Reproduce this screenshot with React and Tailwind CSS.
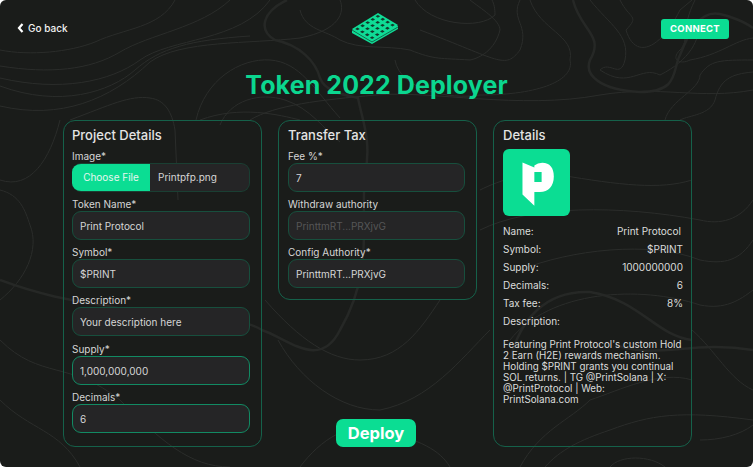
import React from 'react';

const font = { fontFamily: 'Inter' };

const thinLines = [
  'M0 50 C30 56 70 52 95 42 C125 28 160 28 175 0',
  'M0 66 C50 74 90 70 120 52 C150 34 200 28 230 0',
  'M0 78 C60 92 110 82 140 60 C170 38 240 42 270 0',
  'M0 106 C60 120 110 100 150 62 C180 40 250 44 300 38 C340 30 345 12 340 0',
  'M0 86 C60 108 110 92 135 70 C160 48 190 40 250 36',
  'M70 120 C110 105 130 95 150 98 C165 100 172 112 175 130 L178 200',
  'M196 120 C205 80 240 58 270 60 C300 62 315 90 340 118',
  'M220 125 C230 100 260 92 285 100 C310 108 325 130 340 142',
  'M300 10 C305 30 325 30 340 40 C360 50 385 45 410 50 C435 60 440 58 470 60 C480 58 495 50 500 30 C500 20 480 8 470 0',
  'M415 0 C430 25 480 30 495 15 C495 8 494 4 492 0',
  'M520 0 C510 20 530 25 520 50 C505 70 500 60 420 30',
  'M530 0 C540 30 575 35 570 60 C575 80 540 95 480 95 C450 100 400 90 395 60',
  'M590 0 C610 25 630 35 625 60 C620 80 610 60 600 70 C630 90 640 65 660 75 C690 60 700 40 700 20',
  'M620 0 C630 20 640 15 626 30 C635 60 660 50 680 10 L692 0',
  'M695 0 C680 30 690 40 680 50 C670 60 680 65 690 60 C720 55 735 40 753 38',
  'M753 60 C720 60 710 60 700 75 C700 90 670 100 665 120',
  'M753 72 C730 74 720 80 715 100 C710 115 690 115 680 120',
  'M250 120 C275 105 320 100 376 95 C430 90 520 110 600 95 C660 85 700 100 753 90',
  'M200 120 C240 105 280 115 300 120',
  'M0 180 C30 190 50 160 60 120',
  'M0 300 C25 280 40 250 30 225 C25 210 20 195 0 190',
  'M480 190 C500 180 530 170 560 175 C620 185 660 190 692 180',
  'M480 230 C530 205 620 205 700 220 C720 225 740 220 753 200',
  'M520 270 C570 250 650 240 700 260 C725 265 740 260 753 240',
  'M510 340 C550 290 640 285 700 305 C725 310 740 300 753 290',
  'M0 340 C40 380 70 360 120 400 C160 440 190 467 230 467',
  'M0 400 C30 430 60 430 80 467',
  'M300 467 C320 440 350 420 380 430 C420 440 440 450 450 467',
  'M520 467 C540 430 570 420 590 400 C620 390 660 370 692 380',
  'M545 467 C560 450 580 440 610 430 C650 415 680 410 753 420',
  'M610 467 C620 455 650 455 665 467',
  'M692 330 C715 350 730 380 753 390',
  'M700 440 C720 440 740 435 753 425',
  'M265 300 C300 340 330 360 360 360 C400 360 420 330 440 300',
  'M278 340 C300 380 340 410 380 410 C430 400 460 360 490 330',
];

const thickLines = [
  'M287 0 C262 12 258 30 275 40 C300 45 316 62 320 78 C325 92 345 95 358 98 C362 120 372 140 365 175 C360 220 375 270 340 330 C320 370 290 340 262 330 C230 310 190 335 150 320 C120 300 80 310 0 280',
  'M573 0 C580 30 605 35 590 60 C584 75 600 90 640 92 C680 92 672 70 680 55 C690 30 700 10 720 14 C730 16 745 22 753 28',
  'M692 340 C655 335 640 300 590 292 C545 290 520 320 510 360',
  'M615 345 C660 360 690 340 753 350',
];

const logoCells = [];
for (let r = 0; r < 4; r++) {
  for (let c = 0; c < 5; c++) {
    const u = (c + 0.55) / 5.1;
    const v = (r + 0.55) / 4.1;
    const x = 1 + u * 26 + v * 20;
    const y = 17 + u * -16 + v * 12;
    logoCells.push(`M${x - 2.3} ${y} L${x} ${y - 1.4} L${x + 2.3} ${y} L${x} ${y + 1.4} Z`);
  }
}

const Field = ({ label, value, strong, muted }) => (
  <div className="flex flex-col">
    <label className="h-[19px] pt-[5px] text-[10px] leading-[14px] text-[#d6d6d6]">{label}</label>
    <input
      readOnly
      value={value}
      style={font}
      className={`h-[29px] w-full rounded-[9px] border bg-[#252526] px-[7px] text-[10px] outline-none ${
        strong ? 'border-[#128a63]' : 'border-[#174f3d]'
      } ${muted ? 'text-[#555657]' : 'text-[#d6d6d6]'}`}
    />
  </div>
);

const Row = ({ label, value, extra }) => (
  <div className="flex h-[18px] items-center justify-between">
    <span>{label}</span>
    <span className={extra ? 'pr-[2px]' : ''}>{value}</span>
  </div>
);

const App = () => {
  return (
    <div style={font} className="relative h-[467px] w-[753px] overflow-hidden rounded-[6px] bg-[#1a1c1a] text-white">
      {/* Contour background */}
      <svg className="absolute inset-0" width="753" height="467" viewBox="0 0 753 467" fill="none">
        {thinLines.map((d) => (
          <path key={d} d={d} stroke="#2b2d2b" strokeWidth="1" />
        ))}
        {thickLines.map((d) => (
          <path key={d} d={d} stroke="#262826" strokeWidth="2.5" />
        ))}
      </svg>

      <div className="relative flex h-full flex-col">
        {/* Header */}
        <div className="flex h-[57px] items-start justify-between pl-[17px] pr-[24px]">
          <a className="mt-[21px] flex items-center gap-[4px] text-[10px] font-medium leading-[14px] text-[#f2f2f2]">
            <svg width="7" height="10" viewBox="0 0 7 10" fill="none">
              <path d="M5.5 1 L2 5 L5.5 9" stroke="white" strokeWidth="2.2" />
            </svg>
            Go back
          </a>
          <svg className="ml-[22px] mt-[12px]" width="48" height="33" viewBox="0 0 48 33" fill="none">
            <path d="M1 21 L1 18 L27 2 L47 14 L47 17 L21 32 Z" fill="#0fdc96" />
            <path d="M1 18 L21 30 L47 15" stroke="#123a2c" strokeWidth="0.7" />
            <path d="M1 17 L27 1 L47 13 L21 29 Z" fill="#0fdc96" />
            {logoCells.map((d) => (
              <path key={d} d={d} fill="#123a2c" />
            ))}
          </svg>
          <button className="mt-[19px] h-[20px] w-[68px] rounded-[3px] bg-[#0bdd93] text-[9.5px] font-bold tracking-[0.3px] text-white">
            CONNECT
          </button>
        </div>

        <h1 className="h-[63px] pt-[12px] text-center text-[25px] font-bold leading-[32px] tracking-[0.1px] text-[#0bd68f]">
          Token 2022 Deployer
        </h1>

        {/* Columns */}
        <div className="grid grid-cols-[199px_199px_199px] gap-x-[16px] pl-[63px]">
          <section className="h-[327px] rounded-[12px] border border-[#15614a] pl-[8px] pr-[11px]">
            <h2 className="h-[23px] pt-[5px] text-[13px] font-medium leading-[18px] text-[#e4e4e4]">Project Details</h2>
            <div className="flex flex-col">
              <div className="flex flex-col">
                <label className="h-[19px] pt-[5px] text-[10px] leading-[14px] text-[#d6d6d6]">Image*</label>
                <div className="flex h-[29px] overflow-hidden rounded-[9px] border border-l-0 border-[#1a3f33] bg-[#252526] text-[10px]">
                  <span className="flex w-[78px] items-center justify-center bg-[#0bdd93] text-[#e6f7f0]">Choose File</span>
                  <span className="flex items-center pl-[8px] text-[#d6d6d6]">Printpfp.png</span>
                </div>
              </div>
              <Field label="Token Name*" value="Print Protocol" />
              <Field label="Symbol*" value="$PRINT" />
              <Field label="Description*" value="Your description here" />
              <div className="h-[1px]" />
              <Field label="Supply*" value="1,000,000,000" strong />
              <Field label="Decimals*" value="6" strong />
            </div>
          </section>

          <div className="flex h-[327px] flex-col items-center justify-between">
            <section className="h-[180px] w-full rounded-[12px] border border-[#15614a] pl-[9px] pr-[11px]">
              <h2 className="h-[23px] pt-[5px] text-[13px] font-medium leading-[18px] text-[#e4e4e4]">Transfer Tax</h2>
              <Field label="Fee %*" value="7" />
              <Field label="Withdraw authority" value="PrinttmRT...PRXjvG" muted />
              <Field label="Config Authority*" value="PrinttmRT...PRXjvG" />
            </section>
            <button className="mr-[3px] h-[28px] w-[80px] rounded-[7px] bg-[#0bdd93] text-[16.5px] font-bold text-white">Deploy</button>
          </div>

          <section className="h-[327px] rounded-[12px] border border-[#15614a] pl-[9px] pr-[8px] text-[10px] text-[#dcdcdc]">
            <h2 className="h-[28px] pt-[5px] text-[13px] font-medium leading-[18px] text-[#e4e4e4]">Details</h2>
            <div className="flex h-[67px] w-[67px] items-center justify-center rounded-[6px] bg-[#0bdd93]">
              <svg width="67" height="67" viewBox="0 0 203 203">
                <path
                  fillRule="evenodd"
                  fill="white"
                  d="M59 41 L95 56 L95 50 Q105 42 119 42 C142 42 154 58 154 83 C154 113 137 130 112 130 L95 130 L95 172 L59 138 Z M95 70 L117 70 L117 100 L95 100 Z"
                />
              </svg>
            </div>
            <div className="mt-[6px]">
              <Row label="Name:" value="Print Protocol" extra />
              <Row label="Symbol:" value="$PRINT" />
              <Row label="Supply:" value="1000000000" />
              <Row label="Decimals:" value="6" />
              <Row label="Tax fee:" value="8%" />
              <Row label="Description:" value="" />
            </div>
            <p className="mt-[9px] whitespace-nowrap text-[9.8px] leading-[11px]">
              Featuring Print Protocol's custom Hold
              <br />
              2 Earn (H2E) rewards mechanism.
              <br />
              Holding $PRINT grants you continual
              <br />
              SOL returns. | TG @PrintSolana | X:
              <br />
              @PrintProtocol | Web:
              <br />
              PrintSolana.com
            </p>
          </section>
        </div>
      </div>
    </div>
  );
};

export default App;
